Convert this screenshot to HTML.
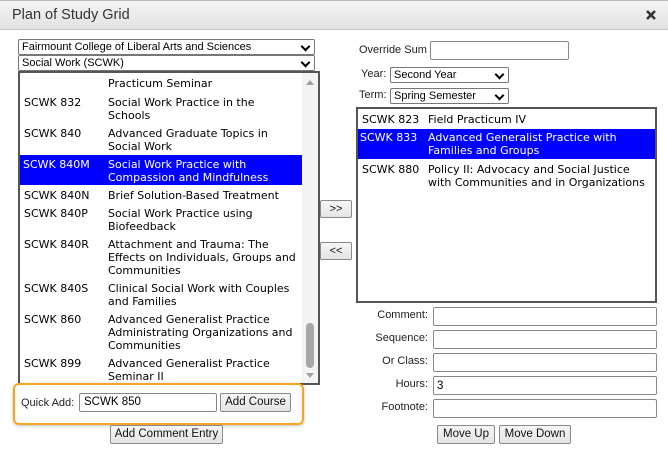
<!DOCTYPE html>
<html><head><style>
*{box-sizing:border-box;margin:0;padding:0}
body{width:668px;height:458px;background:#fff;position:relative;overflow:hidden;font-family:"Liberation Sans",Arial,sans-serif;font-size:12px;color:#000}
.a{position:absolute}
.title{left:0;top:0;width:668px;height:30px;background:linear-gradient(#f4f4f4,#e2e2e2);border-bottom:1px solid #c8c8c8;border-top:1px solid #bbb}
.title span{position:absolute;left:12px;top:6px;font-size:14.5px;color:#333}
.sel{border:1px solid #777;background:#fff;font-size:11px;padding-left:3px;line-height:14px;border-radius:2px}
.sel:after{content:"";position:absolute;right:5px;top:3px;width:5px;height:5px;border-right:2px solid #000;border-bottom:2px solid #000;transform:rotate(45deg)}
.list{border:2px solid #555;background:#fff;font-family:"DejaVu Sans",Verdana,sans-serif;font-size:11px;line-height:13px}
.r{position:absolute;white-space:nowrap}
.hl{background:#0000ff;color:#fff}
.inp{border:1px solid #888;background:#fff;border-radius:2px}
.btn{border:1px solid #8a8a8a;background:linear-gradient(#f6f6f6,#e4e4e4);border-radius:2px;font-size:11.5px;text-align:center;line-height:16px;color:#111}
.lbl{font-size:11px;color:#222;text-align:right}
</style></head><body>
<div class="a title"><span>Plan of Study Grid</span>
<svg class="a" style="left:645px;top:8px" width="12" height="12" viewBox="0 0 12 12"><path d="M2 2L10 10M10 2L2 10" stroke="#333" stroke-width="2.6"/></svg></div>

<div class="a sel" style="left:18px;top:39px;width:297px;height:16px">Fairmount College of Liberal Arts and Sciences</div>
<div class="a sel" style="left:18px;top:55px;width:297px;height:16px">Social Work (SCWK)</div>

<div class="a list" style="left:18px;top:71px;width:302px;height:314px;overflow:hidden">
<div class="r" style="left:88px;top:4px">Practicum Seminar</div>
<div class="r" style="left:4px;top:23px">SCWK 832</div><div class="r" style="left:88px;top:23px">Social Work Practice in the<br>Schools</div>
<div class="r" style="left:4px;top:54px">SCWK 840</div><div class="r" style="left:88px;top:54px">Advanced Graduate Topics in<br>Social Work</div>
<div class="r hl" style="left:0;top:82px;width:282px;height:30px"></div>
<div class="r" style="left:3px;top:85px;color:#fff">SCWK 840M</div><div class="r" style="left:88px;top:85px;color:#fff">Social Work Practice with<br>Compassion and Mindfulness</div>
<div class="r" style="left:4px;top:116px">SCWK 840N</div><div class="r" style="left:88px;top:116px">Brief Solution-Based Treatment</div>
<div class="r" style="left:4px;top:134px">SCWK 840P</div><div class="r" style="left:88px;top:134px">Social Work Practice using<br>Biofeedback</div>
<div class="r" style="left:4px;top:165px">SCWK 840R</div><div class="r" style="left:88px;top:165px">Attachment and Trauma: The<br>Effects on Individuals, Groups and<br>Communities</div>
<div class="r" style="left:4px;top:209px">SCWK 840S</div><div class="r" style="left:88px;top:209px">Clinical Social Work with Couples<br>and Families</div>
<div class="r" style="left:4px;top:240px">SCWK 860</div><div class="r" style="left:88px;top:240px">Advanced Generalist Practice<br>Administrating Organizations and<br>Communities</div>
<div class="r" style="left:4px;top:284px">SCWK 899</div><div class="r" style="left:88px;top:284px">Advanced Generalist Practice<br>Seminar II</div>
<div class="r" style="left:282px;top:0;width:16px;height:310px;background:#f4f4f4"></div>
<svg class="r" style="left:285px;top:5px" width="10" height="8"><path d="M1 7L5 2L9 7Z" fill="#a0a0a0"/></svg>
<div class="r" style="left:286px;top:250px;width:8px;height:45px;background:#a8a8a8;border-radius:4px"></div>
<svg class="r" style="left:285px;top:299px" width="10" height="8"><path d="M1 1L5 6L9 1Z" fill="#a0a0a0"/></svg>
</div>

<div class="a" style="left:13px;top:383px;width:291px;height:42px;border:2px solid #f5a623;border-radius:6px;box-shadow:0 1px 3px rgba(0,0,0,.25)"></div>
<div class="a lbl" style="left:21px;top:397px">Quick Add:</div>
<div class="a inp" style="left:79px;top:393px;width:138px;height:19px;padding-left:4px;font-size:11.5px;line-height:17px">SCWK 850</div>
<div class="a btn" style="left:220px;top:393px;width:71px;height:19px">Add Course</div>
<div class="a btn" style="left:110px;top:425px;width:113px;height:19px">Add Comment Entry</div>

<div class="a btn" style="left:320px;top:200px;width:32px;height:18px;font-size:11px">&gt;&gt;</div>
<div class="a btn" style="left:320px;top:242px;width:32px;height:18px;font-size:11px">&lt;&lt;</div>

<div class="a lbl" style="left:359px;top:44px">Override Sum</div>
<div class="a inp" style="left:430px;top:41px;width:139px;height:19px"></div>
<div class="a lbl" style="left:361px;top:68px">Year:</div>
<div class="a sel" style="left:390px;top:67px;width:119px;height:16px">Second Year</div>
<div class="a lbl" style="left:359px;top:89px">Term:</div>
<div class="a sel" style="left:390px;top:88px;width:119px;height:16px">Spring Semester</div>

<div class="a list" style="left:356px;top:107px;width:301px;height:196px;overflow:hidden">
<div class="r" style="left:4px;top:4px">SCWK 823</div><div class="r" style="left:70px;top:4px">Field Practicum IV</div>
<div class="r hl" style="left:0;top:20px;width:297px;height:30px"></div>
<div class="r" style="left:2px;top:22px;color:#fff">SCWK 833</div><div class="r" style="left:70px;top:22px;color:#fff">Advanced Generalist Practice with<br>Families and Groups</div>
<div class="r" style="left:4px;top:54px">SCWK 880</div><div class="r" style="left:70px;top:54px">Policy II: Advocacy and Social Justice<br>with Communities and in Organizations</div>
</div>

<div class="a lbl" style="left:360px;top:309px;width:68px">Comment:</div>
<div class="a inp" style="left:433px;top:307px;width:224px;height:19px"></div>
<div class="a lbl" style="left:360px;top:332px;width:68px">Sequence:</div>
<div class="a inp" style="left:433px;top:330px;width:224px;height:19px"></div>
<div class="a lbl" style="left:360px;top:355px;width:68px">Or Class:</div>
<div class="a inp" style="left:433px;top:353px;width:224px;height:19px"></div>
<div class="a lbl" style="left:360px;top:378px;width:68px">Hours:</div>
<div class="a inp" style="left:433px;top:376px;width:224px;height:19px;padding-left:3px;line-height:19px;font-size:11.5px">3</div>
<div class="a lbl" style="left:360px;top:401px;width:68px">Footnote:</div>
<div class="a inp" style="left:433px;top:399px;width:224px;height:19px"></div>
<div class="a btn" style="left:437px;top:425px;width:58px;height:19px">Move Up</div>
<div class="a btn" style="left:499px;top:425px;width:72px;height:19px">Move Down</div>
</body></html>
